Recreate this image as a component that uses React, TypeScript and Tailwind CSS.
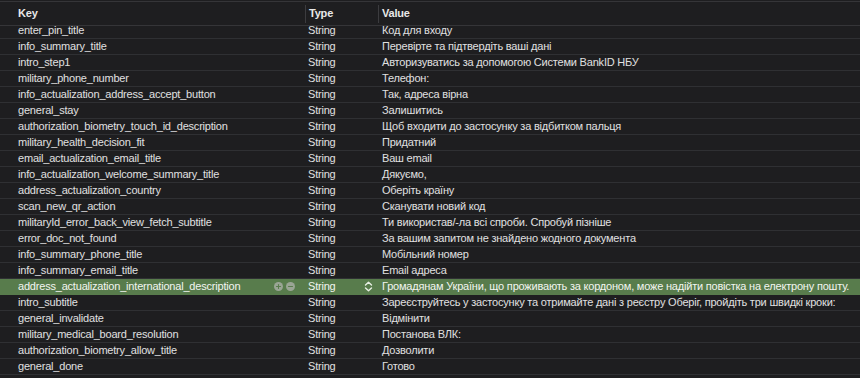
import { Plus, Minus } from "lucide-react";

const rows = [
  ["enter_pin_title", "Код для входу"],
  ["info_summary_title", "Перевірте та підтвердіть ваші дані"],
  ["intro_step1", "Авторизуватись за допомогою Системи BankID НБУ"],
  ["military_phone_number", "Телефон:"],
  ["info_actualization_address_accept_button", "Так, адреса вірна"],
  ["general_stay", "Залишитись"],
  ["authorization_biometry_touch_id_description", "Щоб входити до застосунку за відбитком пальця"],
  ["military_health_decision_fit", "Придатний"],
  ["email_actualization_email_title", "Ваш email"],
  ["info_actualization_welcome_summary_title", "Дякуємо,"],
  ["address_actualization_country", "Оберіть країну"],
  ["scan_new_qr_action", "Сканувати новий код"],
  ["militaryId_error_back_view_fetch_subtitle", "Ти використав/-ла всі спроби. Спробуй пізніше"],
  ["error_doc_not_found", "За вашим запитом не знайдено жодного документа"],
  ["info_summary_phone_title", "Мобільний номер"],
  ["info_summary_email_title", "Email адреса"],
  ["address_actualization_international_description", "Громадянам України, що проживають за кордоном, може надійти повістка на електрону пошту."],
  ["intro_subtitle", "Зареєструйтесь у застосунку та отримайте дані з реєстру Оберіг, пройдіть три швидкі кроки:"],
  ["general_invalidate", "Відмінити"],
  ["military_medical_board_resolution", "Постанова ВЛК:"],
  ["authorization_biometry_allow_title", "Дозволити"],
  ["general_done", "Готово"],
  ["", ""],
];

const SELECTED = 16;

function Stepper() {
  return (
    <svg width="9" height="11" viewBox="0 0 9 11" fill="none" stroke="#e8efe4" strokeWidth="1.4" strokeLinecap="round" strokeLinejoin="round">
      <path d="M1.5 4 L4.5 1.2 L7.5 4" />
      <path d="M1.5 7 L4.5 9.8 L7.5 7" />
    </svg>
  );
}

export default function App() {
  return (
    <div className="w-[860px] h-[378px] overflow-hidden bg-[#1e1e20] pt-px font-['Liberation_Sans',sans-serif] text-[11px] tracking-[-0.2px] text-[#e0e0e0]">
      <div className="relative z-10 flex h-[25px] items-center border-t border-b border-[#353538] bg-[#1e1e20] font-bold text-[#e8e8e8]">
        <div className="w-[305px] pl-[18px]">Key</div>
        <div className="flex h-[18px] w-[73px] items-center border-l border-[#3c3c3f] pl-[3px]">Type</div>
        <div className="flex h-[18px] flex-1 items-center border-l border-[#3c3c3f] pl-[3px]">Value</div>
      </div>
      <div className="-mt-[3px]">
        {rows.map(([key, value], i) => {
          const sel = i === SELECTED;
          return (
            <div
              key={i}
              className={`flex h-[16px] items-center border-b leading-[15px] ${
                sel ? "border-[#587c4c] bg-[#587c4c] text-[#f2f5f0]" : "border-[#2f3033]"
              }`}
            >
              <div className="flex w-[305px] items-center pl-[18px] pr-[10px]">
                <span className="flex-1 whitespace-nowrap">{key}</span>
                {sel && (
                  <span className="flex items-center gap-[3px]">
                    <span className="flex h-[9px] w-[9px] items-center justify-center rounded-full bg-[#9aa595] text-[#587c4c]">
                      <Plus size={7} strokeWidth={3.5} />
                    </span>
                    <span className="flex h-[9px] w-[9px] items-center justify-center rounded-full bg-[#9aa595] text-[#587c4c]">
                      <Minus size={7} strokeWidth={3.5} />
                    </span>
                  </span>
                )}
              </div>
              <div className="flex w-[73px] items-center pl-[3px] pr-[5px]">
                <span className="flex-1">{key ? "String" : ""}</span>
                {sel && <Stepper />}
              </div>
              <div className="flex-1 whitespace-nowrap pl-[4px]">{value}</div>
            </div>
          );
        })}
      </div>
    </div>
  );
}
